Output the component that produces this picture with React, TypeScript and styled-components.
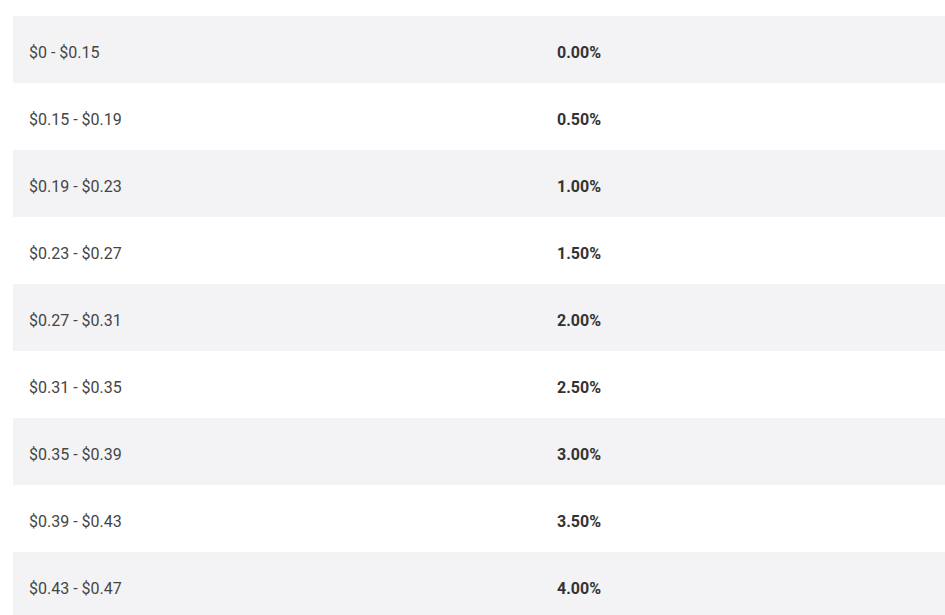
import React from "react";
import styled, { createGlobalStyle } from "styled-components";

const Global = createGlobalStyle`
  html, body { margin: 0; padding: 0; background: #ffffff; overflow: hidden; }
  body { font-family: Roboto, "Liberation Sans", Arial, sans-serif; }
`;

const Page = styled.div`
  padding: 16px 0 0 13px;
  width: 1100px;
`;

const Table = styled.div`
  display: grid;
  grid-template-columns: 528px 528px;
  width: 1056px;
`;

const Row = styled.div<{ $alt: boolean }>`
  display: contents;
  & > div { background: ${(p) => (p.$alt ? "#f3f3f5" : "#ffffff")}; }
`;

const Cell = styled.div<{ $bold?: boolean }>`
  height: 67px;
  box-sizing: border-box;
  display: flex;
  align-items: center;
  padding: 6px 16px 0;
  font-size: 16px;
  color: ${(p) => (p.$bold ? "#333333" : "#454545")};
  font-weight: ${(p) => (p.$bold ? 700 : 400)};
`;

const rows = [
  ["$0 - $0.15", "0.00%"],
  ["$0.15 - $0.19", "0.50%"],
  ["$0.19 - $0.23", "1.00%"],
  ["$0.23 - $0.27", "1.50%"],
  ["$0.27 - $0.31", "2.00%"],
  ["$0.31 - $0.35", "2.50%"],
  ["$0.35 - $0.39", "3.00%"],
  ["$0.39 - $0.43", "3.50%"],
  ["$0.43 - $0.47", "4.00%"],
];

export default function App() {
  return (
    <>
      <Global />
      <Page>
        <Table>
          {rows.map(([range, pct], i) => (
            <Row key={range} $alt={i % 2 === 0}>
              <Cell>{range}</Cell>
              <Cell $bold>{pct}</Cell>
            </Row>
          ))}
        </Table>
      </Page>
    </>
  );
}
